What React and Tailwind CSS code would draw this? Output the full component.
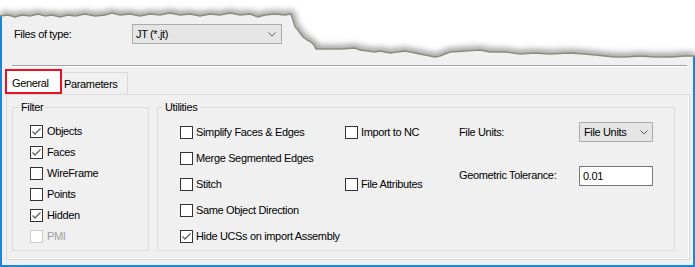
import React from "react";

const torn = [
  [0,16],[8,15],[15,17],[22,15],[30,16],[38,14],[45,16],[52,15],[60,17],[68,15],[75,16],[85,14],[95,16],[105,15],[112,13],[120,15],[130,14],[140,16],[150,14],[160,15],[170,13],[180,15],[190,14],[200,16],[210,14],[220,15],[230,13],[240,15],[250,14],[258,17],[265,15],[275,14],[285,15],[291,14],[293,20],[295,27],[298,30],[300,33],[303,37],[307,40],[311,42],[314,45],[316,49],[330,49],[340,49],[355,48],[360,50],[375,52],[380,51],[390,53],[405,51],[415,53],[425,55],[435,57],[440,56],[450,52],[465,51],[480,50],[490,52],[505,52],[520,54],[535,53],[550,54],[570,53],[585,54],[595,55],[605,56],[615,57],[625,57],[640,56],[655,57],[670,57],[685,56],[695,56]
];

const linePath = "M" + torn.map(([x, y]) => `${x},${y}`).join(" L");
const areaPath = "M0,-5 L700,-5 L700,56 " + [...torn].reverse().map(([x, y]) => `L${x},${y}`).join(" ") + " L-5,16 Z";

function TornEdge() {
  return (
    <svg className="absolute left-0 top-0 pointer-events-none" width="695" height="70" viewBox="0 0 695 70">
      <defs>
        <clipPath id="above">
          <path d={areaPath} />
        </clipPath>
        <filter id="blur" x="-10%" y="-50%" width="120%" height="200%">
          <feGaussianBlur stdDeviation="3" />
        </filter>
      </defs>
      <path d={areaPath} fill="#ffffff" />
      <g clipPath="url(#above)">
        <path d={linePath} fill="none" stroke="#7a7a7a" strokeWidth="7" filter="url(#blur)" opacity="0.8" />
      </g>
      <path d={linePath} fill="none" stroke="#8c8c7c" strokeWidth="1.4" />
    </svg>
  );
}

function Chevron() {
  return (
    <svg width="8" height="5" viewBox="0 0 8 5">
      <polyline points="0.5,0.5 4,4 7.5,0.5" fill="none" stroke="#606060" strokeWidth="1" />
    </svg>
  );
}

function Box({ checked, disabled }) {
  return (
    <span
      className={
        "w-[13px] h-[13px] shrink-0 border bg-white flex items-center justify-center " +
        (disabled ? "border-[#cccccc]" : "border-[#333333]")
      }
    >
      {checked && (
        <svg width="11" height="11" viewBox="0 0 11 11">
          <polyline points="1.5,5.5 4,8 9.5,2.5" fill="none" stroke="#606060" strokeWidth="1.3" />
        </svg>
      )}
    </span>
  );
}

function FilterRow({ label, checked, disabled }) {
  return (
    <div className="flex items-center h-[21px] gap-[4px]">
      <Box checked={checked} disabled={disabled} />
      <span className={disabled ? "text-[#a0a0a0]" : ""}>{label}</span>
    </div>
  );
}

function UtilRow({ label, checked }) {
  return (
    <div className="flex items-center h-[26px] gap-[3px]">
      {label !== null && <Box checked={checked} />}
      {label !== null && <span>{label}</span>}
    </div>
  );
}

export default function App() {
  return (
    <div className="relative w-[695px] h-[267px] bg-white overflow-hidden text-[11px] tracking-[-0.35px] text-black [font-family:'Liberation_Sans',Arial,sans-serif]">
      <div className="h-full bg-[#f0f0f0] border-x-2 border-b-2 border-[#1a86d9] flex flex-col pt-[24px]">
        <div className="flex items-center h-[20px]">
          <span className="pl-[12px] w-[130px]">Files of type:</span>
          <div className="w-[150px] h-[20px] border border-[#adadad] bg-[#e5e5e5] flex items-center justify-between pl-[3px] pr-[5px]">
            <span>JT (*.jt)</span>
            <Chevron />
          </div>
        </div>

        <div className="mt-[21px] ml-[10px] mr-[6px] h-[2px] border-t border-[#a0a0a0] border-b border-b-white" />

        <div className="mt-[2px] flex items-end h-[25px] pl-[3px]">
          <div className="h-[25px] w-[57px] border-2 border-[#e81123] bg-white flex items-center pl-[5px] pt-[3px] relative z-10">
            General
          </div>
          <div className="h-[22px] w-[66px] border-t border-r border-[#d9d9d9] flex items-center pl-[2px] pt-[1px]">
            Parameters
          </div>
        </div>

        <div className="ml-[4px] w-[684px] h-[166px] border border-[#d9d9d9] shadow-[inset_-1px_-1px_0_#ffffff] flex gap-[8px] pt-[6px] pl-[5px]">
          <fieldset className="w-[137px] h-[150px] border border-[#dcdcdc]">
            <legend className="ml-[6px] px-[2px] leading-[13px]">Filter</legend>
            <div className="pt-[7px] pl-[17px] flex flex-col">
              <FilterRow label="Objects" checked />
              <FilterRow label="Faces" checked />
              <FilterRow label="WireFrame" />
              <FilterRow label="Points" />
              <FilterRow label="Hidden" checked />
              <FilterRow label="PMI" disabled />
            </div>
          </fieldset>

          <fieldset className="w-[518px] h-[150px] border border-[#dcdcdc]">
            <legend className="ml-[5px] px-[2px] leading-[13px]">Utilities</legend>
            <div className="pt-[5px] pl-[22px] flex">
              <div className="w-[165px] flex flex-col">
                <UtilRow label="Simplify Faces & Edges" />
                <UtilRow label="Merge Segmented Edges" />
                <UtilRow label="Stitch" />
                <UtilRow label="Same Object Direction" />
                <UtilRow label="Hide UCSs on import Assembly" checked />
              </div>
              <div className="w-[114px] flex flex-col">
                <UtilRow label="Import to NC" />
                <UtilRow label={null} />
                <UtilRow label="File Attributes" />
              </div>
              <div className="flex flex-col mt-[3px]">
                <div className="flex items-center h-[20px]">
                  <span className="w-[120px]">File Units:</span>
                  <div className="w-[74px] h-[20px] border border-[#adadad] bg-[#e5e5e5] flex items-center justify-between pl-[4px] pr-[4px]">
                    <span>File Units</span>
                    <Chevron />
                  </div>
                </div>
                <div className="flex items-center h-[20px] mt-[24px]">
                  <span className="w-[120px] -mt-[2px]">Geometric Tolerance:</span>
                  <div className="w-[74px] h-[20px] border border-[#7a7a7a] bg-white flex items-center pl-[3px]">
                    0.01
                  </div>
                </div>
              </div>
            </div>
          </fieldset>
        </div>
      </div>
      <TornEdge />
    </div>
  );
}
